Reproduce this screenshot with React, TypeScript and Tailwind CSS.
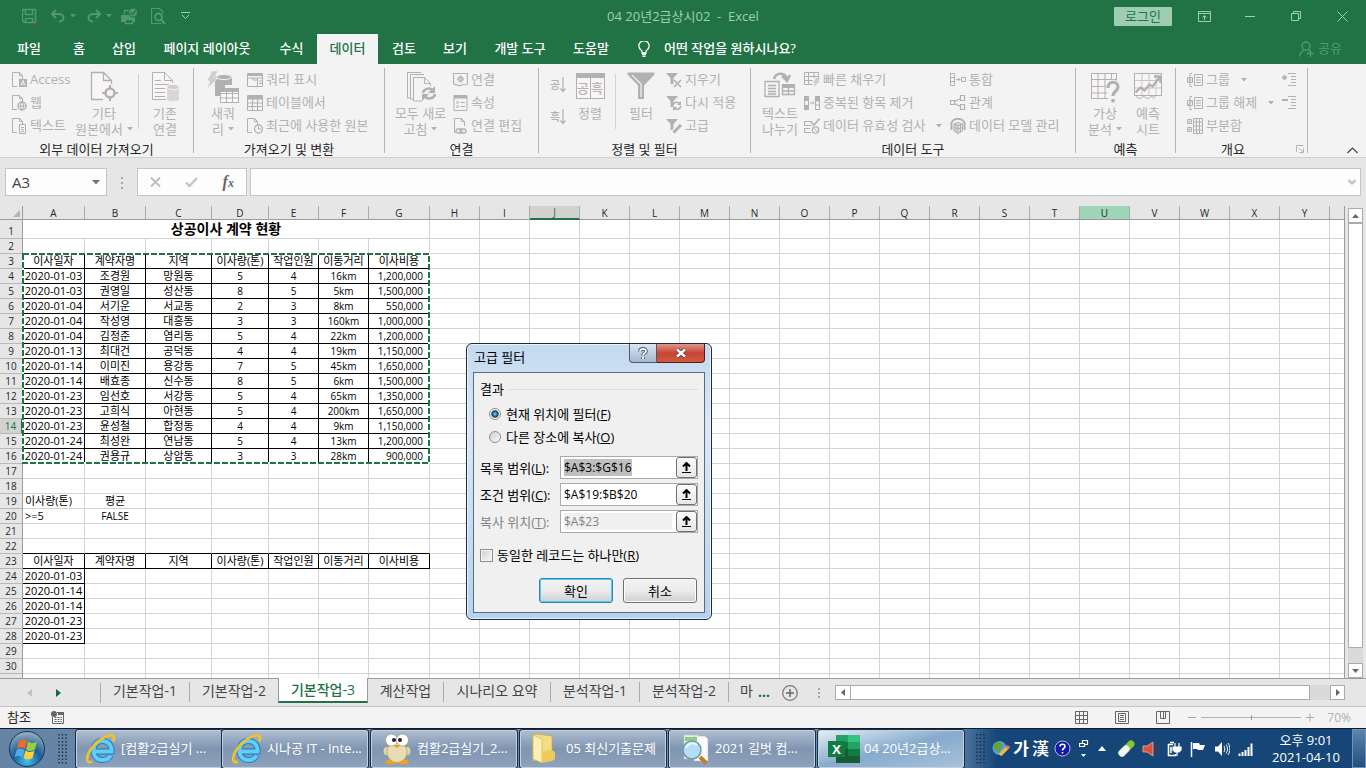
import { useEffect, useRef } from 'react';
import type { ReactNode } from 'react';
import { clsx } from 'clsx';

/* ---------- shared bits ---------- */

type IconProps = { w: number; h: number; className?: string; children: ReactNode };

function Icon({ w, h, className, children }: IconProps) {
  return (
    <svg
      width={w}
      height={h}
      viewBox={`0 0 ${w} ${h}`}
      fill="none"
      stroke="currentColor"
      aria-hidden="true"
      className={clsx('shrink-0', className)}
    >
      {children}
    </svg>
  );
}

function Caret({ className }: { className?: string }) {
  return (
    <Icon w={6} h={4} className={className}>
      <path d="M0 0h6L3 3.5z" fill="currentColor" stroke="none" />
    </Icon>
  );
}

/* ---------- title bar ---------- */

function TitleBar() {
  return (
    <header className="grid h-[32px] shrink-0 grid-cols-[1fr_auto_1fr] items-center text-[#a0cdb3]">
      <div className="flex items-center pl-[22px] text-[#549773]">
        <button aria-label="저장" className="mr-[12px]">
          <Icon w={16} h={20}>
            <path d="M.5 3.5h13v13H2.500l-2-2zM3.500 3.500v5h7v-5M3.500 16.500v-4h7v4" strokeWidth="1.500" />
            <path d="M14 18.500h2" stroke="#b3362b" strokeWidth="2" />
          </Icon>
        </button>
        <button aria-label="실행 취소" className="flex items-center gap-[4px]">
          <Icon w={16} h={14}>
            <path d="M6 1L2 5l4 4M2 5h7c3 0 4.500 2 4.500 4s-2 3.500-4.500 3.500" strokeWidth="2" />
          </Icon>
          <Caret />
        </button>
        <button aria-label="다시 실행" className="ml-[10px] flex items-center gap-[4px]">
          <Icon w={16} h={14}>
            <path d="M10 1l4 4-4 4M14 5H7C4 5 2.500 7 2.500 9S4.500 12.500 7 12.500" strokeWidth="2" />
          </Icon>
          <Caret />
        </button>
        <button aria-label="인쇄" className="ml-[9px]">
          <Icon w={17} h={17}>
            <path d="M0 7h14v7H0z" fill="currentColor" stroke="none" />
            <path d="M3.500 6.500v-4H8M4.500 11.500h7v4h-7z" fill="#217346" strokeWidth="1.300" />
            <circle cx="12" cy="4.500" r="4.500" fill="currentColor" stroke="#217346" />
            <path d="M9.500 4.500l2 2 3-4" stroke="#217346" strokeWidth="1.300" />
          </Icon>
        </button>
        <button aria-label="인쇄 미리 보기" className="ml-[13px]">
          <Icon w={16} h={17}>
            <path d="M10 15.500H.5V.5h8l3 3V6" strokeWidth="1.200" />
            <circle cx="7.500" cy="9" r="3.500" strokeWidth="1.800" />
            <path d="M10 11.500l4 4.500" strokeWidth="2.200" />
          </Icon>
        </button>
        <button aria-label="빠른 실행 도구 모음 사용자 지정" className="ml-[14px] text-[#a0cdb3]">
          <Icon w={9} h={8}>
            <path d="M0 .5h9M1 3l3.500 3.500L8 3" />
          </Icon>
        </button>
      </div>
      <h1 className="text-[13px] leading-[16px] whitespace-pre">04 20년2급상시02  -  Excel</h1>
      <div className="flex items-center justify-end pr-[18px]">
        <button className="mr-[26px] h-[19px] w-[58px] rounded-[1px] bg-[#9fcdb4] text-[13px] leading-[18px] text-[#217346]">
          로그인
        </button>
        <button aria-label="리본 메뉴 표시 옵션" className="mr-[34px]">
          <Icon w={13} h={11}>
            <path d="M.5.5h12v10H.5zM.5 2.500h12M6.500 9V4.500M4.500 6.500l2-2 2 2" />
          </Icon>
        </button>
        <button aria-label="최소화" className="mr-[36px]">
          <Icon w={10} h={11}>
            <path d="M0 5.500h10" />
          </Icon>
        </button>
        <button aria-label="이전 크기로 복원" className="mr-[36px]">
          <Icon w={10} h={10}>
            <path d="M.5 2.500h7v7h-7zM2.500 2.500v-2h7v7h-2" />
          </Icon>
        </button>
        <button aria-label="닫기">
          <Icon w={11} h={11}>
            <path d="M.5.5l10 10M10.500.5l-10 10" />
          </Icon>
        </button>
      </div>
    </header>
  );
}

const TABS = [
  { name: '파일', width: 'w-[58px]' },
  { name: '홈', width: 'w-[42px]' },
  { name: '삽입', width: 'w-[48px]' },
  { name: '페이지 레이아웃', width: 'w-[118px]' },
  { name: '수식', width: 'w-[51px]' },
  { name: '데이터', width: 'w-[61px]' },
  { name: '검토', width: 'w-[52px]' },
  { name: '보기', width: 'w-[50px]' },
  { name: '개발 도구', width: 'w-[80px]' },
  { name: '도움말', width: 'w-[62px]' },
];

function TabBar() {
  return (
    <nav className="flex h-[32px] shrink-0 items-end text-[13px] font-medium text-white">
      {TABS.map((tab) => (
        <button
          key={tab.name}
          className={clsx(
            'h-[30px] shrink-0 whitespace-nowrap',
            tab.width,
            tab.name === '데이터' && 'bg-[#f3f3f3] text-[#217346]',
          )}
        >
          {tab.name}
        </button>
      ))}
      <button className="flex h-[30px] items-center gap-[14px] pl-[16px]">
        <Icon w={12} h={16}>
          <path d="M4 12V10C2 8.500.8 7 .8 5a5 5 0 0 1 10.400 0c0 2-1.200 3.500-3.200 5v2zM4 13.500h4M4.500 15.500h3" strokeWidth="1.300" />
        </Icon>
        어떤 작업을 원하시나요?
      </button>
      <button className="mr-[24px] ml-auto flex h-[30px] items-center gap-[4px] font-normal text-[#549773]">
        <Icon w={15} h={16}>
          <circle cx="7" cy="5" r="4" strokeWidth="1.300" />
          <path d="M.8 15.500C1 12 3 10 5 9M9 9l2 1.500M8 12.500h7M11.500 9v7" strokeWidth="1.300" />
        </Icon>
        공유
      </button>
    </nav>
  );
}

/* ---------- ribbon ---------- */

function SmallButton({ icon, label, menu }: { icon: ReactNode; label: string; menu?: boolean }) {
  return (
    <button className="flex h-[23px] items-center gap-[3px] whitespace-nowrap">
      <span className="flex w-[16px] justify-center">{icon}</span>
      {label}
      {menu && <Caret className="ml-[8px]" />}
    </button>
  );
}

type BigButtonProps = { icon: ReactNode; lines: string[]; width: string; menu?: boolean };

function BigButton({ icon, lines, width, menu }: BigButtonProps) {
  return (
    <button className={clsx('flex shrink-0 flex-col items-center pt-[3px] whitespace-nowrap', width)}>
      <span className="flex h-[34px] items-start">{icon}</span>
      {lines.map((line, i) => (
        <span key={line} className="flex items-center gap-[4px] leading-[16px]">
          {line}
          {menu && i === lines.length - 1 && <Caret />}
        </span>
      ))}
    </button>
  );
}

type GroupProps = { label: string; width: string; launcher?: boolean; children: ReactNode };

function Group({ label, width, launcher, children }: GroupProps) {
  return (
    <section className={clsx('flex shrink-0 flex-col border-r border-[#b5b5b5]', width)}>
      <div className="flex h-[72px] shrink-0 text-[13px] text-[#b1b1b1]">{children}</div>
      <div className="flex h-[18px] shrink-0 items-center">
        <h2 className="flex-1 text-center text-[13px] leading-[18px] text-[#262626]">{label}</h2>
        {launcher && (
          <button aria-label="개요 설정" className="pr-[3px] pl-[6px] text-[#b1b1b1]">
            <Icon w={8} h={8}>
              <path d="M.5 7V.5H7M3 3l4 4M7.500 3.500v4h-4" />
            </Icon>
          </button>
        )}
      </div>
    </section>
  );
}

function Divider({ className }: { className?: string }) {
  return <span className={clsx('mt-[6px] h-[55px] w-px shrink-0 bg-[#d2d2d2]', className)} />;
}

const doc = 'M5 14.500H.5V.5h7l3 3V7M7.500.5v3h3';

function Ribbon() {
  return (
    <div className="flex h-[94px] shrink-0 overflow-hidden border-b border-[#cfcfcf] bg-[#f3f3f3] pt-[4px] pb-[4px]">
      <Group label="외부 데이터 가져오기" width="w-[194px]">
        <div className="w-[74px] shrink-0 pl-[11px]">
          <SmallButton
            label="Access"
            icon={
              <Icon w={15} h={16}>
                <path d={doc} />
                <path d="M7 7h8v8H7z" fill="currentColor" stroke="none" />
                <path d="M9 13.500L11 8.500l2 5M9.500 12h3" stroke="#f3f3f3" />
              </Icon>
            }
          />
          <SmallButton
            label="웹"
            icon={
              <Icon w={15} h={16}>
                <path d={doc} />
                <circle cx="10" cy="11" r="4" strokeWidth="1.400" fill="#f3f3f3" />
                <path d="M6 11h8M10 7c-2 2-2 6 0 8M10 7c2 2 2 6 0 8" />
              </Icon>
            }
          />
          <SmallButton
            label="텍스트"
            icon={
              <Icon w={15} h={16}>
                <path d={doc} />
                <path d="M7.500 6.500h6v9h-6zM9 9.500h3M9 11.500h3M9 13.500h3" fill="#f3f3f3" />
              </Icon>
            }
          />
        </div>
        <BigButton
          width="w-[60px]"
          lines={['기타', '원본에서']}
          menu
          icon={
            <Icon w={28} h={32}>
              <path d="M21.500 14V9.500l-8-8h-12v27H13" fill="#f8f4f8" stroke="none" />
              <path d="M21.500 13V9.500l-8-8h-12v27H13M13.500 1.500v8h8" strokeWidth="1.300" />
              <circle cx="20" cy="22" r="4.500" strokeWidth="2.500" fill="#f3f3f3" />
              <path d="M20 14v4M20 26v4M12 22h4M24 22h4" strokeWidth="2" />
            </Icon>
          }
        />
        <Divider className="ml-[4px]" />
        <BigButton
          width="w-[52px]"
          lines={['기존', '연결']}
          icon={
            <Icon w={28} h={32}>
              <path d="M21.500 12V9.500l-8-8h-12v27H15" fill="#f8f4f8" stroke="none" />
              <path d="M21.500 12V9.500l-8-8h-12v27H15M13.500 1.500v8h8M4 9.500h6M4 13.500h14M4 17.500h10M4 21.500h10M4 25.500h10" />
              <path d="M16 16v12c0 3 12 3 12 0V16z" fill="#dad7da" stroke="none" />
              <ellipse cx="22" cy="16" rx="6" ry="2.500" fill="#cfcccf" stroke="#f3f3f3" />
            </Icon>
          }
        />
      </Group>

      <Group label="가져오기 및 변환" width="w-[191px]">
        <BigButton
          width="w-[53px] pl-[5px]"
          lines={['새쿼', '리']}
          menu
          icon={
            <Icon w={32} h={32}>
              <path d="M8 5v20h10V14h7V5z" fill="currentColor" stroke="none" />
              <path d="M5 0h6L7 7h4L0 18l3-8H0z" fill="#d0cdd0" stroke="#f3f3f3" strokeWidth=".6" />
              <ellipse cx="17" cy="6" rx="7.500" ry="2.500" fill="currentColor" stroke="#f3f3f3" />
              <path d="M13.500 17.500h18v14h-18zM13.500 22.500h18M13.500 27h18M19.500 20v11M25.500 20v11" fill="#fbf7fb" />
              <path d="M13 17h19v4H13z" fill="currentColor" stroke="none" />
            </Icon>
          }
        />
        <div className="shrink-0">
          <SmallButton
            label="쿼리 표시"
            icon={
              <Icon w={16} h={14}>
                <path d="M.5.5h15v13H.5zM.5 5h15M10.500 5v8M12 8h3M12 10.500h3M6 5v2h4" />
                <path d="M1 1h14v2H1z" fill="currentColor" stroke="none" />
              </Icon>
            }
          />
          <SmallButton
            label="테이블에서"
            icon={
              <Icon w={16} h={16}>
                <path d="M.5.5h15v15H.5zM.5 8h15M.5 11.500h15M5.500 4v11M10.500 4v11" />
                <path d="M1 1h14v3.500H1z" fill="currentColor" stroke="none" />
              </Icon>
            }
          />
          <SmallButton
            label="최근에 사용한 원본"
            icon={
              <Icon w={16} h={16}>
                <path d={doc} />
                <circle cx="11.500" cy="11" r="4" fill="#f3f3f3" strokeWidth="1.300" />
                <path d="M11.500 8.500V11H14" />
              </Icon>
            }
          />
        </div>
      </Group>

      <Group label="연결" width="w-[154px]">
        <BigButton
          width="w-[67px] pl-[4px]"
          lines={['모두 새로', '고침']}
          menu
          icon={
            <Icon w={30} h={32}>
              <path d="M5 27H1.500V1.500H15M8 28H4.500V3.500H18M16 30H7.500V6.500h11l6 6V15M18.500 6.500v6h6" />
              <path d="M17 22c1-5 8-6 10-2M29 23c-1 5-8 6-10 2" strokeWidth="2.500" />
              <path d="M29 15v7h-7zM16 30v-7h7z" fill="currentColor" stroke="none" />
            </Icon>
          }
        />
        <div className="shrink-0">
          <SmallButton
            label="연결"
            icon={
              <Icon w={15} h={14}>
                <path d="M.5 11.500V.5h14v11M1 11.500c3-1 3 2 6 1s4-1 7-1M7.500 3l3 3-3 3-3-3z" strokeWidth="1.200" />
                <circle cx="7.500" cy="6" r="1" />
              </Icon>
            }
          />
          <SmallButton
            label="속성"
            icon={
              <Icon w={15} h={16}>
                <path d="M1 .5h13v15H1zM7.500 7.500H12M7.500 11.500H12" />
                <path d="M1 0h13v3.500H1z" fill="currentColor" stroke="none" />
                <circle cx="4.500" cy="7.500" r="1" />
                <circle cx="4.500" cy="11.500" r="1" />
              </Icon>
            }
          />
          <SmallButton
            label="연결 편집"
            icon={
              <Icon w={14} h={16}>
                <path d="M3 14.500H1.500V.5h7l3 3V8M8.500.5v3h3" />
                <rect x="3" y="11" width="6" height="4" rx="2" strokeWidth="1.300" fill="#f3f3f3" />
                <rect x="7" y="11" width="6" height="4" rx="2" strokeWidth="1.300" />
              </Icon>
            }
          />
        </div>
      </Group>

      <Group label="정렬 및 필터" width="w-[212px]">
        <div className="flex w-[26px] shrink-0 flex-col gap-[10px] pt-[6px] pl-[11px]">
          {['공', '흑'].map((letter, i) => (
            <button key={letter} aria-label={i ? '내림차순 정렬' : '오름차순 정렬'} className="flex h-[22px] items-center">
              <span className="text-[11px] font-medium">{letter}</span>
              <Icon w={6} h={16}>
                <path d="M3 0v14M.5 11.500L3 14.500l2.500-3" strokeWidth="1.200" />
              </Icon>
            </button>
          ))}
        </div>
        <BigButton
          width="w-[50px]"
          lines={['정렬']}
          icon={
            <span className="mt-[2px] flex h-[26px] w-[29px] border border-t-[5px] border-current bg-[#f8f4f8] text-[13px] leading-[20px] font-medium">
              <span className="flex-1 border-r border-current text-center">공</span>
              <span className="flex-1 text-center">흑</span>
            </span>
          }
        />
        <Divider />
        <BigButton
          width="w-[50px]"
          lines={['필터']}
          icon={
            <Icon w={28} h={30}>
              <path d="M.5 1.500h27v2L17 14.500V28h-6V14.500L.5 3.500z" fill="currentColor" stroke="none" />
              <path d="M5 4l9 9v13" stroke="#f3f3f3" strokeWidth="1.200" />
            </Icon>
          }
        />
        <div className="shrink-0">
          <SmallButton
            label="지우기"
            icon={
              <Icon w={16} h={16}>
                <path d="M0 1h12L7.500 6v6h-3V6z" fill="currentColor" stroke="none" />
                <path d="M8 8l7 7M15 8l-7 7" strokeWidth="1.600" />
              </Icon>
            }
          />
          <SmallButton
            label="다시 적용"
            icon={
              <Icon w={16} h={16}>
                <path d="M0 1h12L7.500 6v6h-3V6z" fill="currentColor" stroke="none" />
                <path d="M7 10c1-3 5-4 7-1M15 11c-1 4-5 4-7 2" strokeWidth="1.500" />
                <path d="M15 6v4h-4zM7 16v-4h4z" fill="currentColor" stroke="none" />
              </Icon>
            }
          />
          <SmallButton
            label="고급"
            icon={
              <Icon w={16} h={16}>
                <path d="M0 1h12L7.500 6v6h-3V6z" fill="currentColor" stroke="none" />
                <path d="M7 15l7-8" stroke="#f3f3f3" strokeWidth="5" />
                <path d="M7.500 14.500L15 7" strokeWidth="3" />
              </Icon>
            }
          />
        </div>
      </Group>

      <Group label="데이터 도구" width="w-[325px]">
        <BigButton
          width="w-[53px] pl-[5px]"
          lines={['텍스트', '나누기']}
          icon={
            <Icon w={32} h={32}>
              <path d="M10 8c2-7 11-7 13 0M18 5l5 5 3-6" strokeWidth="2.500" />
              <path d="M1 10.500h14v15H1zM4 14.500h8M4 17.500h8M4 20.500h8M4 23h8" strokeWidth="1.300" />
              <path d="M18.500 14.500h12v9h-12zM18.500 20h12M24.500 14v10" strokeWidth="1.300" />
              <path d="M18 13h13v4H18z" fill="currentColor" stroke="none" />
            </Icon>
          }
        />
        <div className="w-[146px] shrink-0">
          <SmallButton
            label="빠른 채우기"
            icon={
              <Icon w={16} h={15}>
                <path d="M9 12.500H.5V.5h14V6M.5 4.500h14M.5 8.500H9M4.500.5v12M10 .5V6" />
                <path d="M12 6h4l-2 3h2l-6 6 1-4H9z" fill="#d0cdd0" stroke="none" />
              </Icon>
            }
          />
          <SmallButton
            label="중복된 항목 제거"
            icon={
              <Icon w={16} h={14}>
                <path d="M.5.5h4v13h-4zM11.500.5h4v13h-4zM11.500 5h4M11.500 9h4M6 7h4M8.500 5.500L10 7 8.500 8.500" />
                <path d="M0 0h5v5H0zM0 9h5v5H0zM11 0h5v5h-5z" fill="currentColor" stroke="none" />
              </Icon>
            }
          />
          <SmallButton
            label="데이터 유효성 검사"
            menu
            icon={
              <Icon w={16} h={16}>
                <path d="M8 3.500H.5v4H8M6 10.500H.5v4H7" strokeWidth="1.200" />
                <path d="M7 4l3 3 5.500-6.500" strokeWidth="1.600" />
                <circle cx="11.500" cy="12" r="3.200" strokeWidth="1.300" />
                <path d="M9.500 10l4 4" />
              </Icon>
            }
          />
        </div>
        <div className="shrink-0">
          <SmallButton
            label="통합"
            icon={
              <Icon w={16} h={13}>
                <path d="M.5.5h4v12h-4zM.5 4.500h4M.5 8.500h4M6 6.500h4M8.500 5L10 6.500 8.500 8M11.500 4.500h4v4h-4z" />
              </Icon>
            }
          />
          <SmallButton
            label="관계"
            icon={
              <Icon w={16} h={16}>
                <path d="M.5 5.500h4v4h-4zM10.500.5h4v5h-4zM10.500 9.500h4v5h-4zM4.500 6.500l6-3M4.500 8.500l6 3" strokeWidth="1.200" />
              </Icon>
            }
          />
          <SmallButton
            label="데이터 모델 관리"
            icon={
              <Icon w={16} h={16}>
                <path d="M1.500 12V4.500c3-5 10-5 13 0V12" strokeWidth="2" />
                <path d="M4 6l4-1.500L12.500 6v7L8 15.500 4 13z" fill="#e4e1e4" />
                <path d="M8 7.500v8M4 9.500l4 1.500 4.500-1.500M4 6l4 1.500L12.500 6M6 7v7M10.500 7v7" />
              </Icon>
            }
          />
        </div>
      </Group>

      <Group label="예측" width="w-[100px]">
        <BigButton
          width="w-[58px]"
          lines={['가상', '분석']}
          menu
          icon={
            <Icon w={30} h={32}>
              <path d="M18 27.500H1.500v-25h25V12M1.500 8.500h25M1.500 15.500h16M1.500 22h16M8 2.500v25M15 2.500v25M21.500 2.500V10" fill="#f8f4f8" />
              <path d="M18 17c0-8 10-7 10-1 0 4-5 4-5 9" stroke="#f3f3f3" strokeWidth="5" />
              <path d="M18 17c0-8 10-7 10-1 0 4-5 4-5 9M23 28v3.500" strokeWidth="3.200" />
            </Icon>
          }
        />
        <BigButton
          width="w-[28px]"
          lines={['예측', '시트']}
          icon={
            <Icon w={28} h={32}>
              <path d="M.5 2.500h27v22H.5zM.5 9.500h27M.5 17h27M8 2.500v22M15 2.500v22M22 2.500v22" fill="#f8f4f8" stroke="#c9c6c9" />
              <path d="M.5 2.500h27v22H.5zM2 25c1 3 5 3 8 0 1 3 5 3 8 0 1 3 3 2 3 0" />
              <path d="M1.500 21.500l5-5 4 3 5-6 3 2L26 6M20 5.500h6.500V12" strokeWidth="2.300" />
            </Icon>
          }
        />
      </Group>

      <Group label="개요" width="w-[132px]" launcher>
        <div className="w-[106px] shrink-0 pl-[11px]">
          <SmallButton
            label="그룹"
            menu
            icon={
              <Icon w={16} h={14}>
                <path d="M5 .5H3v13h2M.5 4.500h5v5h-5zM3 5.500v3M1.500 7h3M7.500 1.500h8v11h-8zM9 4.500h5M9 7h5M9 9.500h5" />
              </Icon>
            }
          />
          <SmallButton
            label="그룹 해제"
            menu
            icon={
              <Icon w={16} h={14}>
                <path d="M5 .5H3v13h2M.5 4.500h5v5h-5zM.5 10l5-6M7.500 1.500h8v11h-8zM9 4.500h5M9 7h5M9 9.500h5" />
              </Icon>
            }
          />
          <SmallButton
            label="부분합"
            icon={
              <Icon w={16} h={16}>
                <path d="M.5 1.500h4v4h-4zM.5 9.500h4v4h-4zM2.500 2.500v2M1.500 3.500h2M2.500 10.500v2M1.500 11.500h2M6.500.5h9v15h-9zM6.500 4h9M6.500 8h9M6.500 12h9M9.500.5v15M12.500.5v15" />
              </Icon>
            }
          />
        </div>
        <div className="shrink-0">
          <button aria-label="하위 수준 표시" className="flex h-[23px] items-center">
            <Icon w={15} h={13}>
              <path d="M0 4.500h5M2.500 2v5" strokeWidth="2" />
              <path d="M6 .5h8M9 3.500h5M9 6.500h5M9 9.500h5M6 12.500h8" />
            </Icon>
          </button>
          <button aria-label="하위 수준 숨기기" className="flex h-[23px] items-center">
            <Icon w={15} h={13}>
              <path d="M0 4h6" strokeWidth="2" />
              <path d="M6 .5h8M9 3.500h5M9 6.500h5M9 9.500h5M6 12.500h8" />
            </Icon>
          </button>
        </div>
      </Group>

      <button aria-label="리본 메뉴 축소" className="mr-[8px] -mb-[1px] ml-auto self-end text-[#444]">
        <Icon w={11} h={7}>
          <path d="M.5 6L5.500 1l5 5" strokeWidth="1.200" />
        </Icon>
      </button>
    </div>
  );
}

/* ---------- formula bar ---------- */

function FormulaBar() {
  return (
    <div className="flex h-[48px] shrink-0 items-start bg-[#e6e6e6] pt-[10px] pr-[5px] pl-[5px] text-[#444]">
      <label className="flex h-[28px] w-[102px] shrink-0 items-center border border-[#c6c6c6] bg-[#fdfdfd] pr-[6px] pl-[6px]">
        <input aria-label="이름 상자" defaultValue="A3" className="w-full min-w-0 bg-transparent text-[15px] leading-[20px] outline-none" />
        <Icon w={8} h={5}>
          <path d="M0 0h8L4 4.500z" fill="#777" stroke="none" />
        </Icon>
      </label>
      <Icon w={30} h={28}>
        <path d="M15 9v12" stroke="#a6a6a6" strokeWidth="2" strokeDasharray="2 3" />
      </Icon>
      <div className="flex h-[28px] w-[110px] shrink-0 items-center justify-around border border-[#c6c6c6] bg-[#fdfdfd]">
        <button aria-label="취소" className="text-[#bdbdbd]">
          <Icon w={11} h={10}>
            <path d="M1 .5l9 9M10 .5l-9 9" strokeWidth="2" />
          </Icon>
        </button>
        <button aria-label="입력" className="text-[#c4c4c4]">
          <Icon w={13} h={10}>
            <path d="M1 5.500L4.500 9 12 1" strokeWidth="2.400" />
          </Icon>
        </button>
        <button aria-label="함수 삽입" className="font-['Liberation_Serif',serif] text-[16px] leading-[20px] font-bold text-[#666] italic">
          f<span className="text-[12px]">x</span>
        </button>
      </div>
      <label className="ml-[3px] flex h-[28px] min-w-0 flex-1 items-center border border-[#c6c6c6] bg-[#fdfdfd] pr-[4px] pl-[6px]">
        <input aria-label="수식 입력줄" className="w-full min-w-0 bg-transparent text-[13px] outline-none" />
        <Icon w={8} h={6} className="text-[#bdbdbd]">
          <path d="M.5 1L4 4.500 7.500 1" strokeWidth="2" />
        </Icon>
      </label>
    </div>
  );
}

/* ---------- worksheet ---------- */

const COLUMNS = 'ABCDEFGHIJKLMNOPQRSTUVWXY'.split('');
const WIDTHS = ['w-[62px]', 'w-[61px]', 'w-[66px]', 'w-[57px]', 'w-[50px]', 'w-[50px]', 'w-[61px]'];
const HEADINGS = ['이사일자', '계약자명', '지역', '이사량(톤)', '작업인원', '이동거리', '이사비용'];

const CONTRACTS = [
  ['2020-01-03', '조경원', '망원동', '5', '4', '16km', '1,200,000'],
  ['2020-01-03', '권영일', '성산동', '8', '5', '5km', '1,500,000'],
  ['2020-01-04', '서기운', '서교동', '2', '3', '8km', '550,000'],
  ['2020-01-04', '작성영', '대흥동', '3', '3', '160km', '1,000,000'],
  ['2020-01-04', '김정준', '염리동', '5', '4', '22km', '1,200,000'],
  ['2020-01-13', '최대건', '공덕동', '4', '4', '19km', '1,150,000'],
  ['2020-01-14', '이미진', '용강동', '7', '5', '45km', '1,650,000'],
  ['2020-01-14', '배효종', '신수동', '8', '5', '6km', '1,500,000'],
  ['2020-01-23', '임선호', '서강동', '5', '4', '65km', '1,350,000'],
  ['2020-01-23', '고희식', '아현동', '5', '4', '200km', '1,650,000'],
  ['2020-01-23', '윤성철', '합정동', '4', '4', '9km', '1,150,000'],
  ['2020-01-24', '최성완', '연남동', '5', '4', '13km', '1,200,000'],
  ['2020-01-24', '권용규', '상암동', '3', '3', '28km', '900,000'],
];

const ROWS: Record<number, string[]> = {
  3: HEADINGS,
  19: ['이사량(톤)', '평균'],
  20: ['>=5', 'FALSE'],
  23: HEADINGS,
  24: ['2020-01-03'],
  25: ['2020-01-14'],
  26: ['2020-01-14'],
  27: ['2020-01-23'],
  28: ['2020-01-23'],
};
CONTRACTS.forEach((contract, i) => {
  ROWS[i + 4] = contract;
});

const LAST_ROW = 30;

const isBoxed = (row: number, col: number) =>
  (row >= 3 && row <= 16 && col < 7) || (row === 23 && col < 7) || (row >= 24 && row <= 28 && col === 0);

function Cell({ row, col }: { row: number; col: number }) {
  const value = ROWS[row]?.[col] ?? '';
  const boxed = isBoxed(row, col);
  const numeric = /^[\d,]+(km)?$/.test(value) || value === 'FALSE';
  return (
    <td
      className={clsx(
        'overflow-hidden border-r border-b p-0 whitespace-nowrap',
        boxed ? 'border-r-black' : 'border-r-[#d4d4d4]',
        boxed || isBoxed(row + 1, col) ? 'border-b-black' : 'border-b-[#d4d4d4]',
        numeric ? 'text-[10px]' : 'text-[11px]',
        numeric && col === 6 && 'pr-[6px] text-right',
        (row === 19 || row === 20) && col === 0 ? 'pl-[2px] text-left' : !(numeric && col === 6) && 'text-center',
      )}
    >
      {value}
    </td>
  );
}

function Sheet() {
  // one unnumbered row fills what is left under the last full one
  const rows = Array.from({ length: LAST_ROW + 1 }, (_, i) => i + 1);
  return (
    <div className="flex min-h-0 flex-1 bg-[#e6e6e6]">
      <div className="relative min-w-0 flex-1 overflow-hidden border-r border-[#9b9b9b] bg-white">
        <table className="w-full table-fixed border-separate border-spacing-0 leading-[14px] text-black">
          <colgroup>
            <col className="w-[23px]" />
            {COLUMNS.map((c, i) => (
              <col key={c} className={WIDTHS[i] ?? 'w-[50px]'} />
            ))}
            <col />
          </colgroup>
          <thead>
            <tr className="h-[14px] text-[10px] leading-[12px]">
              <th className="border-r border-b border-[#9b9b9b] bg-[#e6e6e6] p-0">
                <Icon w={7} h={7} className="mt-[2px] ml-[13px]">
                  <path d="M7 0v7H0z" fill="#b4b4b4" stroke="none" />
                </Icon>
              </th>
              {COLUMNS.map((c) => (
                <th
                  key={c}
                  scope="col"
                  className={clsx(
                    'border-r border-b border-r-[#ababab] p-0 font-medium',
                    c === 'J' && 'border-b-2 border-b-[#217346] bg-[#d2d2d2] text-[#217346]',
                    c === 'U' && 'border-b-[#9b9b9b] bg-[#9fd5b7] text-[#262626]',
                    c !== 'J' && c !== 'U' && 'border-b-[#9b9b9b] bg-[#e6e6e6] text-[#262626]',
                  )}
                >
                  {c}
                </th>
              ))}
              <th className="border-b border-[#9b9b9b] bg-[#e6e6e6] p-0" />
            </tr>
          </thead>
          <tbody>
            {rows.map((row) => (
              <tr key={row} className={row === 1 ? 'h-[19px]' : 'h-[15px]'}>
                <th
                  scope="row"
                  className={clsx(
                    'border-r border-b border-b-[#b8b8b8] p-0 align-bottom text-[10px] font-medium',
                    row === 14
                      ? 'border-r-2 border-r-[#217346] bg-[#d2d2d2] text-[#217346]'
                      : 'border-r-[#9b9b9b] bg-[#e6e6e6] text-[#262626]',
                  )}
                >
                  {row <= LAST_ROW && row}
                </th>
                {row === 1 ? (
                  <td colSpan={7} className="border-r border-b border-[#d4d4d4] p-0 text-center text-[14px] leading-[18px] font-bold">
                    상공이사 계약 현황
                  </td>
                ) : (
                  WIDTHS.map((_, col) => <Cell key={col} row={row} col={col} />)
                )}
                {COLUMNS.slice(7).map((c) => (
                  <td key={c} className="border-r border-b border-[#d4d4d4] p-0" />
                ))}
                <td className="border-b border-[#d4d4d4] p-0" />
              </tr>
            ))}
          </tbody>
        </table>
        {/* marching ants round A3:G16 */}
        <svg width="408" height="211" className="absolute top-[47px] left-[22px]" aria-hidden="true">
          <rect x="1" y="1" width="406" height="209" fill="none" stroke="#fff" strokeWidth="2" />
          <rect x="1" y="1" width="406" height="209" fill="none" stroke="#217346" strokeWidth="2" strokeDasharray="6 2" />
        </svg>
      </div>
      <div className="flex w-[21px] shrink-0 flex-col items-center pt-[2px]">
        <button aria-label="위로" className="flex h-[15px] w-[15px] items-center justify-center border border-[#ababab] bg-white">
          <Icon w={7} h={4}>
            <path d="M0 4h7L3.500 0z" fill="#666" stroke="none" />
          </Icon>
        </button>
        <div className="flex w-[15px] flex-1 flex-col">
          <div className="flex-1 border border-[#ababab] bg-white" />
          <div className="h-[15px] bg-[#dadada]" />
        </div>
        <button aria-label="아래로" className="flex h-[15px] w-[15px] items-center justify-center border border-[#ababab] bg-white">
          <Icon w={7} h={4}>
            <path d="M0 0h7L3.500 4z" fill="#666" stroke="none" />
          </Icon>
        </button>
      </div>
    </div>
  );
}

const SHEETS = [
  { name: '기본작업-1', width: 'w-[89px]' },
  { name: '기본작업-2', width: 'w-[88px]' },
  { name: '기본작업-3', width: 'w-[90px]' },
  { name: '계산작업', width: 'w-[76px]' },
  { name: '시나리오 요약', width: 'w-[107px]' },
  { name: '분석작업-1', width: 'w-[89px]' },
  { name: '분석작업-2', width: 'w-[89px]' },
];

function SheetTabs() {
  return (
    <div className="flex h-[28px] shrink-0 border-t border-[#9b9b9b] bg-[#e6e6e6] text-[14px] text-[#444]">
      <div className="flex w-[101px] shrink-0 items-center">
        <button aria-label="이전 시트" className="ml-[27px]">
          <Icon w={5} h={8}>
            <path d="M5 0v8L0 4z" fill="#c0c0c0" stroke="none" />
          </Icon>
        </button>
        <button aria-label="다음 시트" className="ml-[24px]">
          <Icon w={5} h={8}>
            <path d="M0 0v8l5-4z" fill="#0f6b38" stroke="none" />
          </Icon>
        </button>
        <span className="ml-auto h-[20px] w-px bg-[#ababab]" />
      </div>
      {SHEETS.map((sheet, i) => {
        const active = sheet.name === '기본작업-3';
        return (
          <div key={sheet.name} className={clsx('flex shrink-0', sheet.width)}>
            <button
              className={clsx(
                'flex-1 whitespace-nowrap',
                active
                  ? '-mt-px h-[25px] border-r border-b-2 border-l border-r-[#9b9b9b] border-b-[#217346] border-l-[#9b9b9b] bg-white font-medium text-[#217346]'
                  : 'h-[23px]',
              )}
            >
              {sheet.name}
            </button>
            {!active && i !== 1 && <span className="mt-[3px] h-[20px] w-px bg-[#ababab]" />}
          </div>
        );
      })}
      <button className="h-[23px] pl-[11px]">마</button>
      <button aria-label="시트 더 보기" className="ml-[5px] h-[24px] font-bold text-[#0f6b38]">
        …
      </button>
      <button aria-label="새 시트" className="ml-[12px]">
        <Icon w={16} h={16}>
          <circle cx="8" cy="8" r="7.300" stroke="#777" strokeWidth="1.200" />
          <path d="M8 4v8M4 8h8" stroke="#666" strokeWidth="1.500" />
        </Icon>
      </button>
      <div className="flex min-w-0 flex-1 items-center pr-[21px] pl-[20px]">
        <Icon w={2} h={12}>
          <path d="M1 1v10" stroke="#a6a6a6" strokeWidth="2" strokeDasharray="2 2" />
        </Icon>
        <button aria-label="왼쪽으로" className="ml-[15px] flex h-[15px] w-[16px] items-center justify-center border border-[#ababab] bg-white">
          <Icon w={4} h={7}>
            <path d="M4 0v7L0 3.500z" fill="#666" stroke="none" />
          </Icon>
        </button>
        <div className="flex h-[15px] flex-1 bg-[#dadada] pr-[20px]">
          <div className="flex-1 border border-l-0 border-[#ababab] bg-white" />
        </div>
        <button aria-label="오른쪽으로" className="flex h-[15px] w-[15px] items-center justify-center border border-[#ababab] bg-white">
          <Icon w={4} h={7}>
            <path d="M0 0v7l4-3.500z" fill="#666" stroke="none" />
          </Icon>
        </button>
      </div>
    </div>
  );
}

function StatusBar() {
  return (
    <footer className="flex h-[22px] shrink-0 items-center border-t border-[#c6c6c6] bg-[#f3f3f3] pr-[15px] pl-[7px] text-[13px] text-[#262626]">
      <span>참조</span>
      <Icon w={13} h={13} className="ml-[20px] text-[#666]">
        <path d="M1.500 6v6.500h11v-11H6" />
        <path d="M3.500 6.500H11M3.500 8.500H11M3.500 10.500H11" strokeDasharray="2 1" />
        <path d="M7 1h6v3H7z" fill="currentColor" stroke="none" />
        <circle cx="3" cy="3" r="3" fill="currentColor" stroke="none" />
      </Icon>
      <div className="ml-auto flex items-center gap-[27px] text-[#666]">
        <button aria-label="기본">
          <Icon w={13} h={13}>
            <path d="M.5.5h12v12H.5zM.5 4.500h12M.5 8.500h12M4.500.5v12M8.500.5v12" />
          </Icon>
        </button>
        <button aria-label="페이지 레이아웃">
          <Icon w={14} h={13}>
            <path d="M.5.5h13v12H.5zM3.500 2.500h7v8h-7zM5 4.500h4M5 6.500h4M5 8.500h4" />
          </Icon>
        </button>
        <button aria-label="페이지 나누기 미리 보기">
          <Icon w={14} h={13}>
            <path d="M.5.5h13v12H.5zM4.500.5v7h5v-7M7.500.5v7" />
          </Icon>
        </button>
      </div>
      <div className="ml-[18px] flex items-center text-[#aaa]">
        <button aria-label="축소">
          <Icon w={8} h={9}>
            <path d="M0 4.500h8" />
          </Icon>
        </button>
        <input
          type="range"
          aria-label="확대/축소"
          defaultValue={50}
          disabled
          className="mx-[5px] h-px w-[100px] appearance-none bg-[#b0b0b0] [&::-webkit-slider-thumb]:h-[5px] [&::-webkit-slider-thumb]:w-px [&::-webkit-slider-thumb]:appearance-none [&::-webkit-slider-thumb]:bg-[#999]"
        />
        <button aria-label="확대">
          <Icon w={8} h={9}>
            <path d="M0 4.500h8M4 .5v8" />
          </Icon>
        </button>
        <span className="ml-[13px] text-[12px] text-[#b1b1b1]">70%</span>
      </div>
    </footer>
  );
}

/* ---------- advanced filter dialog ---------- */

type RangeFieldProps = { id: string; label: string; hotkey: string; value: string; disabled?: boolean; selected?: boolean };

function RangeField({ id, label, hotkey, value, disabled, selected }: RangeFieldProps) {
  const input = useRef<HTMLInputElement>(null);

  useEffect(() => {
    if (selected) {
      input.current?.focus();
      input.current?.select();
    }
  }, [selected]);

  return (
    <div className="flex h-[27px] items-center">
      <label htmlFor={id} className={clsx('w-[80px] shrink-0', disabled && 'text-[#838383]')}>
        {label}(<u>{hotkey}</u>):
      </label>
      <div className="flex h-[23px] min-w-0 flex-1 items-center border border-[#ababab] bg-white pl-[3px]">
        <input
          ref={input}
          id={id}
          defaultValue={value}
          disabled={disabled}
          className="h-[17px] min-w-0 flex-1 bg-white text-[12px] leading-[17px] outline-none selection:bg-[#c0c0c0] selection:text-black disabled:bg-[#f0f0f0] disabled:text-[#838383]"
        />
        <button
          aria-label={`${label} 선택`}
          className="ml-[4px] flex h-[21px] w-[21px] shrink-0 items-center justify-center rounded-[3px] border border-[#707070] bg-linear-to-b from-[#fcfcfc] to-[#e6e6e6]"
        >
          <Icon w={9} h={11} className="text-black">
            <path d="M4.500 9V1.500M1 4.500l3.500-3.500L8 4.500" strokeWidth="2" />
            <path d="M0 10.500h9" />
          </Icon>
        </button>
      </div>
    </div>
  );
}

function FilterDialog() {
  return (
    <div
      role="dialog"
      aria-label="고급 필터"
      className="absolute top-[343px] left-[466px] w-[246px] rounded-[6px] border border-[#1d2a38] bg-linear-to-b from-[#c3d9f0] via-[#d9e8f7] via-30% to-[#b4d2f0] px-[6px] pb-[6px] text-[13px] leading-[18px] text-black shadow-[inset_0_0_0_1px_#eaf4fd]"
    >
      <div className="flex h-[28px] items-start pl-[1px]">
        <h2 className="pt-[4px]">고급 필터</h2>
        <button aria-label="도움말" className="ml-auto flex h-[19px] w-[28px] items-center justify-center rounded-bl-[4px] border border-t-0 border-[#4d5b6b] bg-linear-to-b from-[#dbe7f3] to-[#a4b9cf]">
          <Icon w={10} h={13}>
            <path d="M2 4.500C2 1 8 1 8 4.300 8 6.500 5 6 5 8.500M5 10v2" stroke="#43505e" strokeWidth="3.600" />
            <path d="M2 4.500C2 1 8 1 8 4.300 8 6.500 5 6 5 8.500M5 10v2" stroke="#fff" strokeWidth="1.800" />
          </Icon>
        </button>
        <button aria-label="닫기" className="flex h-[19px] w-[48px] items-center justify-center rounded-br-[4px] border border-t-0 border-l-0 border-[#5b1a14] bg-linear-to-b from-[#e0958a] via-[#c74434] via-50% to-[#cf5a40]">
          <Icon w={12} h={10}>
            <path d="M2 1.500l8 7M10 1.500l-8 7" stroke="#5c3a38" strokeWidth="4" />
            <path d="M2 1.500l8 7M10 1.500l-8 7" stroke="#fff" strokeWidth="2.400" />
          </Icon>
        </button>
      </div>
      <form className="border border-[#5c6b7b] bg-[#f0f0f0] px-[6px] pb-[9px]" onSubmit={(e) => e.preventDefault()}>
        <fieldset>
          <legend className="flex w-full items-center gap-[5px] pt-[7px]">
            결과
            <span className="h-px flex-1 bg-[#d5dfe5]" />
          </legend>
          <label className="mt-[4px] flex h-[23px] items-center gap-[5px] pl-[9px]">
            <input
              type="radio"
              name="target"
              defaultChecked
              className="h-[12px] w-[12px] appearance-none rounded-full border border-[#8e8f8f] bg-[#f4f4f4] checked:bg-radial checked:from-[#4fc0ee] checked:from-10% checked:via-[#12395c] checked:via-45% checked:to-[#f4f4f4] checked:to-60%"
            />
            <span>
              현재 위치에 필터(<u>F</u>)
            </span>
          </label>
          <label className="flex h-[23px] items-center gap-[5px] pl-[9px]">
            <input type="radio" name="target" className="h-[12px] w-[12px] appearance-none rounded-full border border-[#8e8f8f] bg-linear-to-br from-[#cfcfcf] to-[#fafafa]" />
            <span>
              다른 장소에 복사(<u>O</u>)
            </span>
          </label>
        </fieldset>
        <div className="pt-[6px]">
          <RangeField id="list-range" label="목록 범위" hotkey="L" value="$A$3:$G$16" selected />
          <RangeField id="criteria-range" label="조건 범위" hotkey="C" value="$A$19:$B$20" />
          <RangeField id="copy-to" label="복사 위치" hotkey="T" value="$A$23" disabled />
        </div>
        <label className="mt-[10px] flex h-[20px] items-center gap-[4px]">
          <input type="checkbox" className="h-[13px] w-[13px] appearance-none border border-[#8e8f8f] bg-linear-to-br from-[#cfcfcf] to-[#fafafa] outline-1 -outline-offset-2 outline-[#f4f4f4]" />
          <span>
            동일한 레코드는 하나만(<u>R</u>)
          </span>
        </label>
        <div className="mt-[13px] flex justify-end gap-[10px] pr-[1px]">
          <button type="submit" className="h-[25px] w-[74px] rounded-[3px] border border-[#3c7fb1] bg-linear-to-b from-[#f2f2f2] via-[#ebebeb] via-50% to-[#cfcfcf] shadow-[inset_0_0_0_1px_#46d0f4]">
            확인
          </button>
          <button type="button" className="h-[25px] w-[74px] rounded-[3px] border border-[#707070] bg-linear-to-b from-[#f2f2f2] via-[#ebebeb] via-50% to-[#cfcfcf] shadow-[inset_0_0_0_1px_#fcfcfc]">
            취소
          </button>
        </div>
      </form>
    </div>
  );
}

/* ---------- windows taskbar ---------- */

function IeIcon() {
  return (
    <Icon w={32} h={32}>
      <path d="M10 18.500h16.500C27 12 23 8 17.500 8S8.500 12 8.500 17.500 12 27 17.500 27c4 0 6.500-1.500 8-4.500" stroke="#1b7fc0" strokeWidth="6" />
      <path d="M10 18.500h16.500C27 12 23 8 17.500 8S8.500 12 8.500 17.500 12 27 17.500 27c4 0 6.500-1.500 8-4.500" stroke="#63cdf7" strokeWidth="4" />
      <path d="M7 28.500C-1 32 1 19 12 9.500S32 0 28 8.500" stroke="#f4c21f" strokeWidth="2.600" />
    </Icon>
  );
}

function GomIcon() {
  return (
    <Icon w={28} h={32}>
      <ellipse cx="8" cy="29" rx="6" ry="2.500" fill="#f0a31c" stroke="none" />
      <ellipse cx="20" cy="29" rx="6" ry="2.500" fill="#f0a31c" stroke="none" />
      <ellipse cx="3.500" cy="18" rx="3" ry="4" fill="#e4d3a0" stroke="none" />
      <ellipse cx="24.500" cy="18" rx="3" ry="4" fill="#e4d3a0" stroke="none" />
      <ellipse cx="14" cy="19" rx="10" ry="10.500" fill="#eadcb2" stroke="#a99861" strokeWidth=".6" />
      <circle cx="8.500" cy="7" r="6" fill="#fff" stroke="#8b8b7c" strokeWidth=".6" />
      <circle cx="19.500" cy="7" r="6" fill="#fff" stroke="#8b8b7c" strokeWidth=".6" />
      <circle cx="11" cy="7" r="2" fill="#222" stroke="none" />
      <circle cx="17" cy="7" r="2" fill="#222" stroke="none" />
      <path d="M10 12h8l-4 3z" fill="#e9a11d" stroke="none" />
    </Icon>
  );
}

function FolderIcon() {
  return (
    <Icon w={24} h={32}>
      <path d="M1 2l3-1 16 2v20l-4 2L1 28z" fill="#f5dd86" stroke="#c9a63e" strokeWidth=".7" />
      <path d="M1 2l9 4v24l-9-4z" fill="#fbefb4" stroke="#d4b452" strokeWidth=".7" />
      <path d="M20 17l3 2v7l-3 2-10 2V18z" fill="#eccb5c" stroke="none" />
    </Icon>
  );
}

function SearchDocIcon() {
  return (
    <Icon w={28} h={32}>
      <path d="M3 2h14l3 3v21H3z" fill="#e6f2e0" stroke="#b5c9ae" strokeWidth=".6" />
      <path d="M13 3h11l3 3v22H13z" fill="#fbfbfb" stroke="#bbb" strokeWidth=".6" />
      <path d="M4 4h12v4H4z" fill="#8fcf82" stroke="none" />
      <path d="M19 24l6 6" stroke="#c77a24" strokeWidth="4" />
      <circle cx="11" cy="17" r="9" fill="#b5def5" stroke="#7596ae" strokeWidth="1.500" />
      <path d="M5 15c2-5 8-6 11-3" stroke="#eaf7fe" strokeWidth="2" />
    </Icon>
  );
}

function ExcelIcon() {
  return (
    <Icon w={32} h={28} className="font-['Open_Sans',sans-serif]">
      <g stroke="none">
        <path d="M8 0h12v7H8z" fill="#21a366" />
        <path d="M20 0h12v7H20z" fill="#33c481" />
        <path d="M8 7h12v7H8z" fill="#107c41" />
        <path d="M20 7h12v7H20z" fill="#21a366" />
        <path d="M8 14h12v7H8z" fill="#185c37" />
        <path d="M20 14h12v7H20z" fill="#107c41" />
        <path d="M8 21h24v7H8z" fill="#185c37" />
        <path d="M0 6h17v16H0z" fill="#107c41" />
        <text x="8.500" y="19" fill="#fff" fontSize="13" fontWeight="700" textAnchor="middle">
          X
        </text>
      </g>
    </Icon>
  );
}

function Grip() {
  return (
    <Icon w={9} h={32}>
      <path d="M1 1v30M4.500 1v30M8 1v30" stroke="#16283d" strokeDasharray="1.500 2" strokeWidth="1.300" />
    </Icon>
  );
}

function TaskButton({ icon, label, active, className }: { icon: ReactNode; label: string; active?: boolean; className: string }) {
  return (
    <button
      className={clsx(
        'flex h-[38px] w-[146px] shrink-0 items-center rounded-[2px] border border-[#c3d1e0] whitespace-nowrap outline-1 outline-[#1c2c40]',
        active
          ? 'bg-linear-to-br from-[#e3edf6] via-[#86abcc] via-50% to-[#a8c2da]'
          : 'bg-linear-to-b from-[#adbccf] via-[#8095b1] via-50% to-[#8ea2bc]',
        className,
      )}
    >
      {icon}
      {label}
    </button>
  );
}

function Taskbar() {
  return (
    <div className="flex h-[40px] shrink-0 items-center border-t border-[#0f1c2c] bg-linear-to-r from-[#6583a5] via-[#6f93b8] via-69% to-[#164678] to-73% text-[13px] text-white">
      <button aria-label="시작" className="ml-[8px] shrink-0">
        <svg width="38" height="38" viewBox="0 0 38 38" aria-hidden="true">
          <defs>
            <radialGradient id="orb" cx="50%" cy="85%" r="80%">
              <stop offset="0" stopColor="#3fc3ee" />
              <stop offset=".5" stopColor="#1a5e96" />
              <stop offset="1" stopColor="#8fa9bf" />
            </radialGradient>
          </defs>
          <circle cx="19" cy="19" r="17.500" fill="url(#orb)" stroke="#173753" />
          <path d="M11 11c3-2 5-2 8 0l-2 8c-3-2-5-2-8 0z" fill="#ec6a2c" />
          <path d="M20 11.500c3 2 6 2 9 0l-2 8c-3 2-6 2-9 0z" fill="#9bcb3f" />
          <path d="M8.500 20c3-2 5-2 8 0l-2 7.500c-3-2-5-2-8 0z" fill="#53a8e6" />
          <path d="M17.500 20.500c3 2 6 2 9 0l-2 7.500c-3 2-6 2-9 0z" fill="#fbd03a" />
        </svg>
      </button>
      <span className="ml-[12px] shrink-0">
        <Grip />
      </span>
      <div className="ml-[9px] flex shrink-0">
        <TaskButton icon={<IeIcon />} label="[컴활2급실기 ..." className="gap-[4px] pl-[8px]" />
        <TaskButton icon={<IeIcon />} label="시나공 IT - Inte..." className="mr-[3px] gap-[4px] pl-[8px]" />
        <TaskButton icon={<GomIcon />} label="컴활2급실기_2..." className="mr-[3px] gap-[6px] pl-[11px]" />
        <TaskButton icon={<FolderIcon />} label="05 최신기출문제" className="mr-[3px] gap-[10px] pl-[11px]" />
        <TaskButton icon={<SearchDocIcon />} label="2021 길벗 컴..." className="mr-[3px] gap-[6px] pl-[11px]" />
        <TaskButton icon={<ExcelIcon />} label="04 20년2급상..." active className="gap-[4px] pl-[9px]" />
      </div>
      <span className="ml-auto shrink-0">
        <Grip />
      </span>
      <div className="ml-[7px] flex shrink-0 items-center">
        <Icon w={18} h={18}>
          <circle cx="7.500" cy="8" r="7" fill="#5b9fd0" stroke="none" />
          <path d="M3 3c3-2 6-1 7 2s-3 3-2 6-5 0-6-3 0-4 1-5z" fill="#62a33c" stroke="none" />
          <path d="M8 15l8-8" stroke="#f1b74b" strokeWidth="3.500" />
          <path d="M15 8l2-2" stroke="#e66a5e" strokeWidth="3.500" />
        </Icon>
        <span className="ml-[3px] text-[17px] leading-[20px] font-bold">가</span>
        <span className="ml-[3px] text-[17px] leading-[20px] font-medium">漢</span>
        <Icon w={17} h={17} className="ml-[5px]">
          <circle cx="8.500" cy="8.500" r="7.500" fill="#1418a8" stroke="#b9c3e4" />
          <path d="M6 6.500c0-3 5-3 5 0 0 2-2.500 1.500-2.500 4M8.500 12v1.500" stroke="#fff" strokeWidth="1.600" />
        </Icon>
        <Icon w={10} h={18} className="ml-[8px]">
          <path d="M.5 3.500h5v3h-5zM3.500 3V.5h5v4H6" strokeWidth="1.200" />
          <path d="M2 14h5l-2.500 3z" fill="currentColor" stroke="none" />
        </Icon>
        <Icon w={8} h={5} className="ml-[9px]">
          <path d="M0 5h8L4 0z" fill="currentColor" stroke="none" />
        </Icon>
        <Icon w={17} h={17} className="ml-[12px]">
          <path d="M4 13l9-9" stroke="#84c932" strokeWidth="7" strokeLinecap="round" />
          <path d="M4 13l4-4" stroke="#f3f3f3" strokeWidth="7" strokeLinecap="round" />
        </Icon>
        <Icon w={17} h={16} className="ml-[7px]">
          <path d="M1 5h4l6-4v14l-6-4H1z" fill="#d8543c" stroke="#f0b2a4" strokeWidth=".8" />
          <path d="M13 5c1.500 2 1.500 4 0 6M15 3c2 3 2 7 0 10" stroke="#7c2c35" />
        </Icon>
        <Icon w={16} h={16} className="ml-[7px]">
          <path d="M7 3.500H2.500v11h7V13M4 1.500h4M5 6v6" strokeWidth="1.600" />
          <path d="M7 6h8v3l-2 2h-4L7 9zM9 2v4M13 2v4M11 11v4" fill="currentColor" strokeWidth="1.200" />
        </Icon>
        <Icon w={16} h={16} className="ml-[8px]">
          <path d="M1.500 1v15" strokeWidth="1.500" />
          <path d="M3 2h6l1 2h5l-2 5H8L7 8H3z" fill="currentColor" stroke="none" />
        </Icon>
        <Icon w={16} h={16} className="ml-[8px]">
          <path d="M1 5.500h3L8 1v14l-4-4.500H1z" fill="currentColor" stroke="none" />
          <path d="M10 5c1 2 1 4 0 6M12 3.500c2 3 2 6 0 9M14 2c2.500 4 2.500 8 0 12" />
        </Icon>
        <Icon w={16} h={14} className="ml-[8px]">
          <path d="M1.500 14v-2.500M4.500 14v-4M7.500 14V8M10.500 14V5M13.500 14V1.500" strokeWidth="2" />
        </Icon>
        <div className="ml-[17px] w-[70px] text-center leading-[17px] whitespace-nowrap">
          <p>오후 9:01</p>
          <p>2021-04-10</p>
        </div>
        <button aria-label="바탕 화면 보기" className="ml-[11px] h-[39px] w-[14px] border border-[#6d93b8] bg-linear-to-b from-[#5c84ac] to-[#1f4f80]" />
      </div>
    </div>
  );
}

export default function App() {
  return (
    <div className="relative flex h-screen flex-col overflow-hidden bg-[#217346] font-['Open_Sans','Noto_Sans_CJK_KR',sans-serif] antialiased">
      <TitleBar />
      <TabBar />
      <Ribbon />
      <FormulaBar />
      <Sheet />
      <SheetTabs />
      <StatusBar />
      <Taskbar />
      <FilterDialog />
    </div>
  );
}
